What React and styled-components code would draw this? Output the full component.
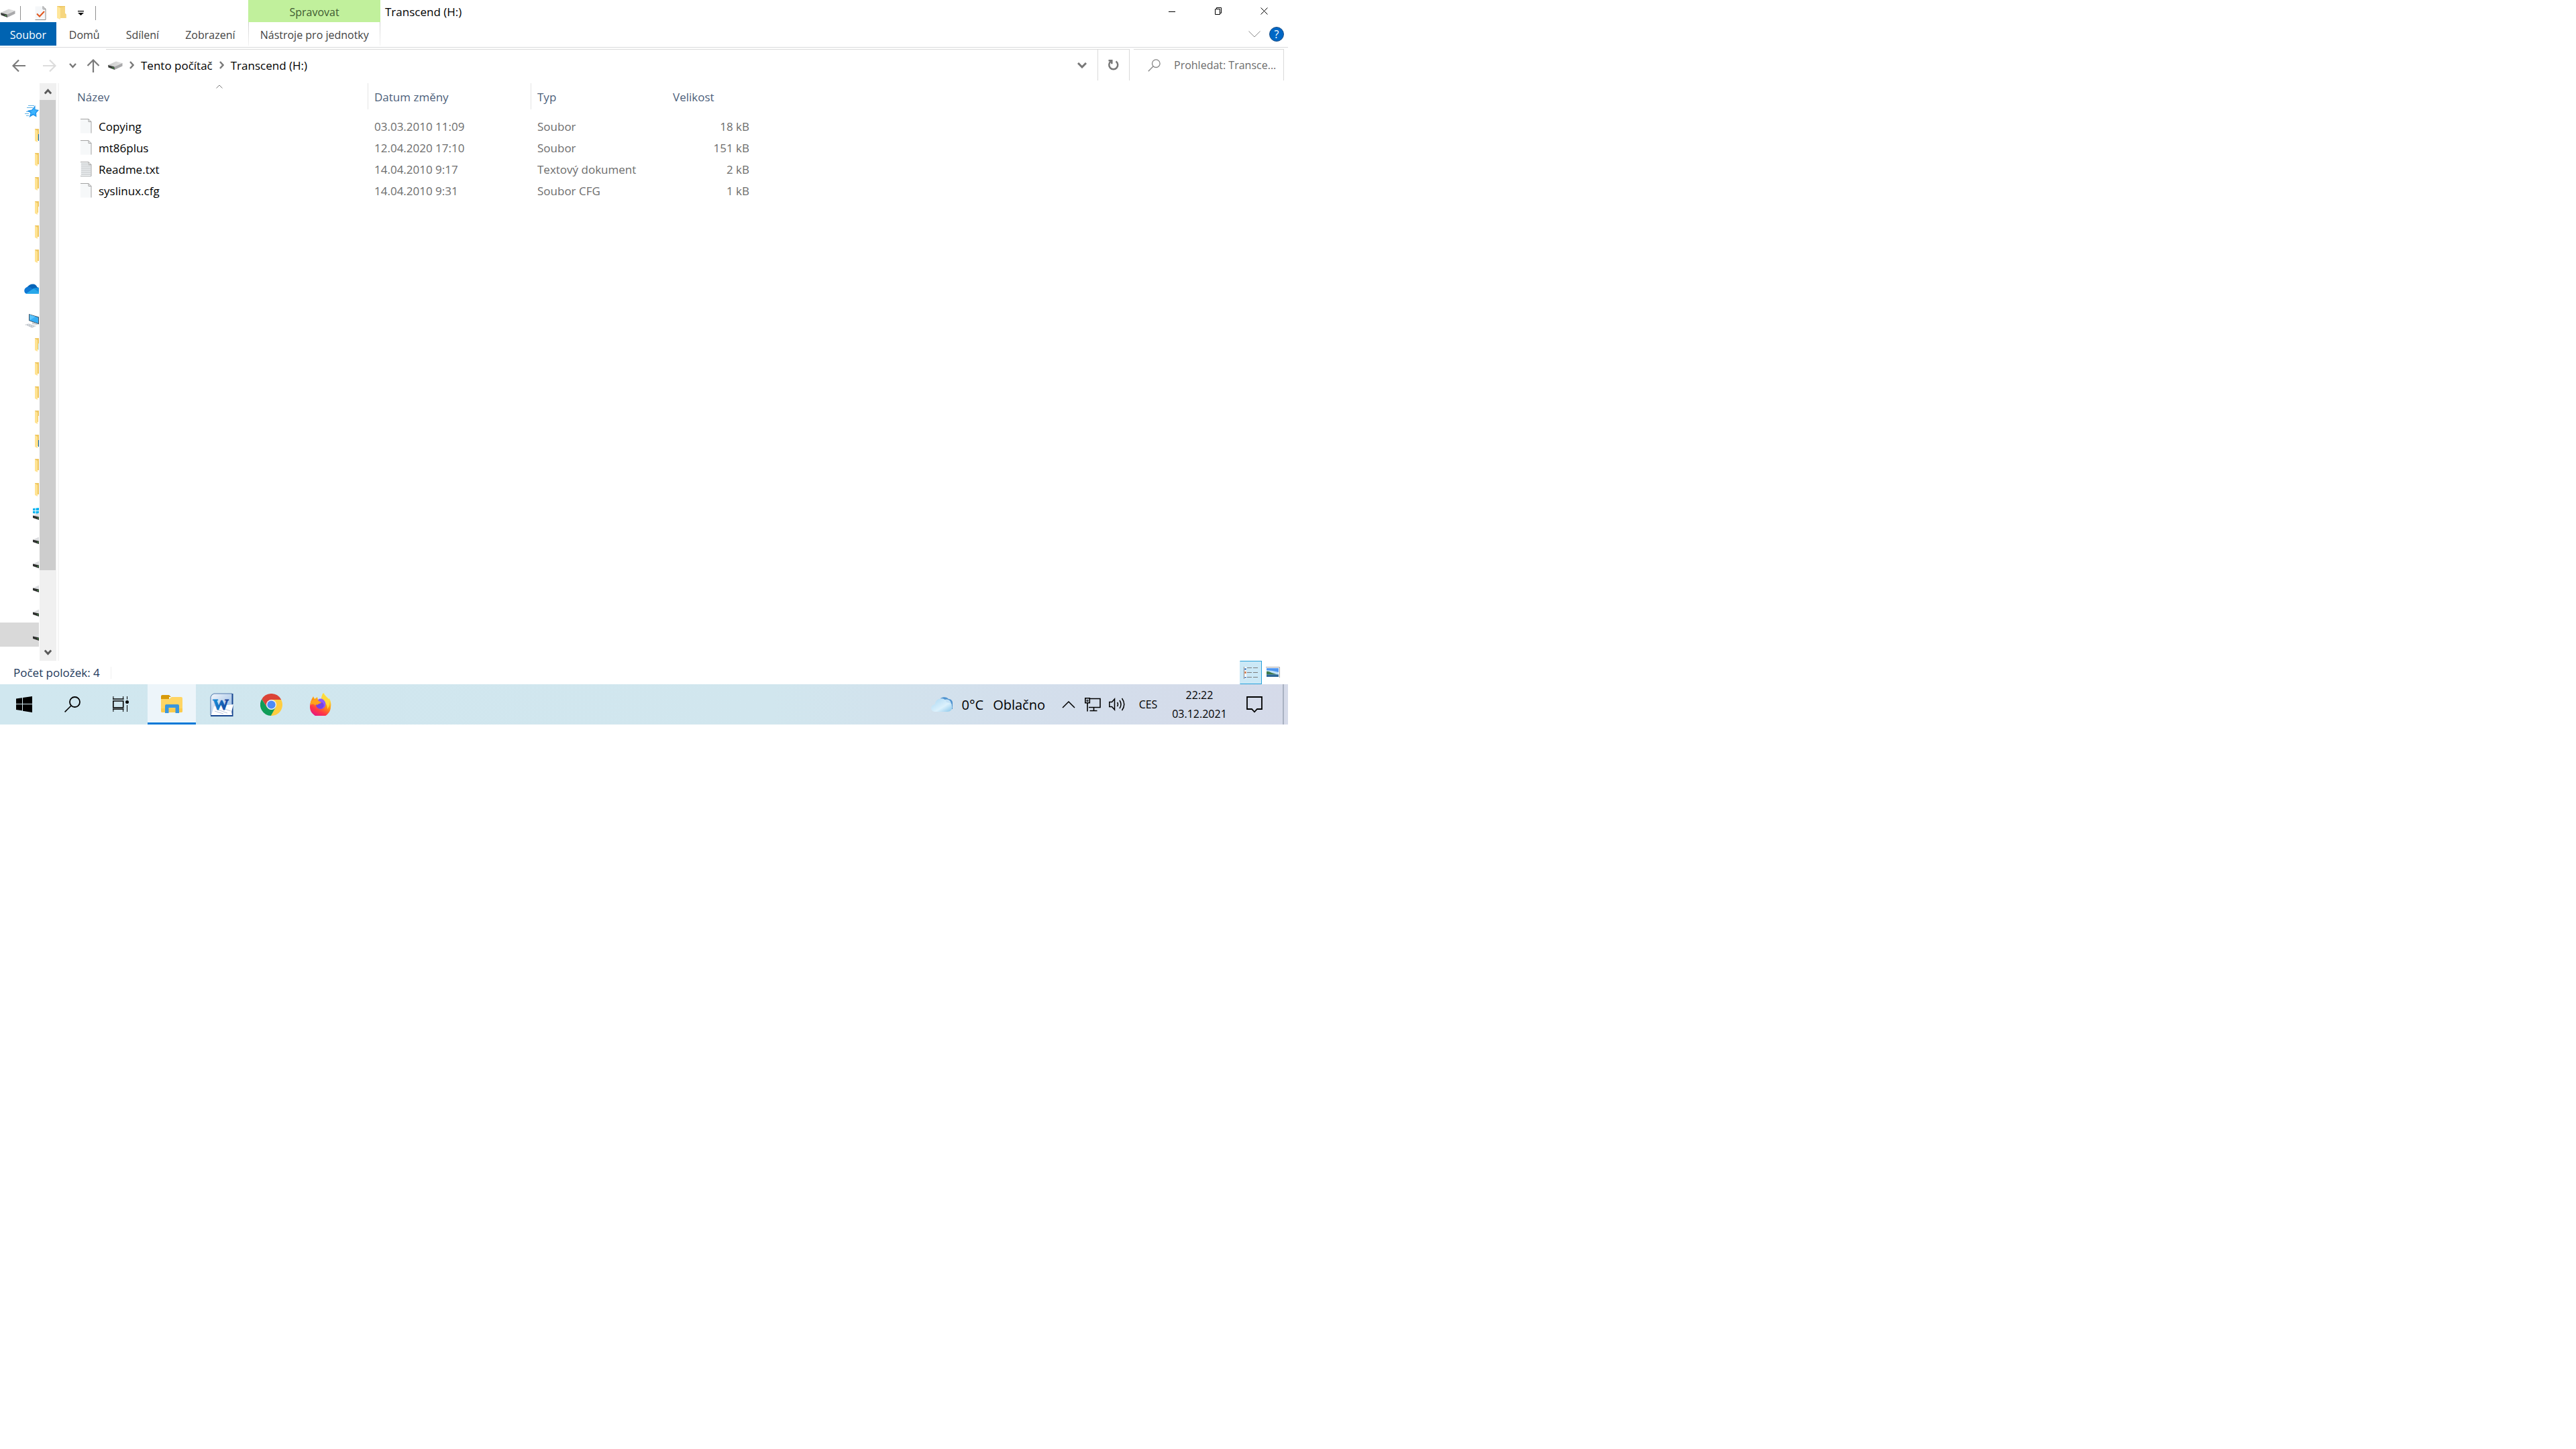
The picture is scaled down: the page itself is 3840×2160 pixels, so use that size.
import { useId } from 'react';
import styled, { createGlobalStyle } from 'styled-components';

const places = [
  { kind: 'star' },
  { kind: 'folder', badge: '#0067b8' },
  { kind: 'folder' },
  { kind: 'folder' },
  { kind: 'folder', badge: '#ffffff' },
  { kind: 'folder' },
  { kind: 'folder' },
  { kind: 'cloud', group: true },
  { kind: 'computer', group: true },
  { kind: 'folder', badge: '#c5ecf5' },
  { kind: 'folder' },
  { kind: 'folder' },
  { kind: 'folder', badge: '#ffffff' },
  { kind: 'folder', badge: '#0067b8' },
  { kind: 'folder' },
  { kind: 'folder' },
  { kind: 'disk', system: true },
  { kind: 'disk' },
  { kind: 'disk' },
  { kind: 'disk' },
  { kind: 'disk' },
  { kind: 'disk', selected: true },
];

const files = [
  { name: 'Copying', date: '03.03.2010 11:09', type: 'Soubor', size: '18 kB' },
  { name: 'mt86plus', date: '12.04.2020 17:10', type: 'Soubor', size: '151 kB' },
  { name: 'Readme.txt', date: '14.04.2010 9:17', type: 'Textový dokument', size: '2 kB', lined: true },
  { name: 'syslinux.cfg', date: '14.04.2010 9:31', type: 'Soubor CFG', size: '1 kB' },
];

const App = () => (
  <>
    <GlobalStyle />
    <Desktop>
      <Window>
        <TitleBar>
          <QuickAccess>
            <DriveIcon />
            <QuickDivider />
            <QuickButton $width={38} aria-label="Vlastnosti"><CheckedPageIcon /></QuickButton>
            <QuickButton $width={26} aria-label="Nová složka"><FolderIcon /></QuickButton>
            <QuickButton $width={30} aria-label="Přizpůsobit"><CustomizeIcon /></QuickButton>
            <QuickDivider />
          </QuickAccess>
          <ContextTitle>Spravovat</ContextTitle>
          <WindowTitle>Transcend (H:)</WindowTitle>
          <WindowButtons>
            <WindowButton aria-label="Minimalizovat">
              <svg width="10" height="10"><path d="M0 5.5h10" stroke="#000" /></svg>
            </WindowButton>
            <WindowButton aria-label="Obnovit">
              <svg width="10" height="11" fill="none" stroke="#000">
                <path d="M.5 2.5h7v8h-7zM2.5 2.5v-2h7v8h-2" />
              </svg>
            </WindowButton>
            <WindowButton aria-label="Zavřít">
              <svg width="11" height="11"><path d="M.5.5l10 10M10.500.5l-10 10" stroke="#000" /></svg>
            </WindowButton>
          </WindowButtons>
        </TitleBar>

        <Ribbon>
          <Tabs>
            <FileTab>Soubor</FileTab>
            <Tab>Domů</Tab>
            <Tab>Sdílení</Tab>
            <Tab>Zobrazení</Tab>
            <ContextTab>Nástroje pro jednotky</ContextTab>
          </Tabs>
          <RibbonTools>
            <PlainButton aria-label="Sbalit pás karet">
              <svg width="18" height="10" fill="none" stroke="#8a8a8a"><path d="M.5.5L9 9l8.500-8.500" /></svg>
            </PlainButton>
            <HelpButton>?</HelpButton>
          </RibbonTools>
        </Ribbon>

        <NavBar>
          <History>
            <PlainButton aria-label="Zpět"><ArrowIcon color="#7a7a7a" /></PlainButton>
            <PlainButton aria-label="Vpřed"><ArrowIcon color="#dcdcdc" turn={180} /></PlainButton>
            <PlainButton aria-label="Poslední umístění">
              <ChevronIcon width={11} height={8} color="#777" />
            </PlainButton>
            <PlainButton aria-label="Nahoru"><ArrowIcon color="#7a7a7a" turn={90} /></PlainButton>
          </History>
          <AddressBox>
            <Crumbs>
              <DriveIcon />
              <CrumbArrow />
              <Crumb href="#pc">Tento počítač</Crumb>
              <CrumbArrow />
              <Crumb href="#h">Transcend (H:)</Crumb>
            </Crumbs>
            <AddressButton aria-label="Předchozí umístění">
              <ChevronIcon width={14} height={9} color="#777" thick />
            </AddressButton>
            <RefreshButton aria-label="Aktualizovat">
              <svg width="18" height="18" fill="none" stroke="#777" strokeWidth="2.500">
                <path d="M12.500 3.500a6.500 6.500 0 1 1-7.500 0" />
                <path d="M1.500 2.200h4.800v5" />
              </svg>
            </RefreshButton>
          </AddressBox>
          <SearchBox>
            <svg width="19" height="19" fill="none" stroke="#858585" strokeWidth="1.300">
              <circle cx="12.300" cy="6.700" r="5.800" />
              <path d="M8.200 10.800L.8 18.200" />
            </svg>
            <SearchInput aria-label="Prohledat" placeholder="Prohledat: Transce..." />
          </SearchBox>
        </NavBar>

        <Content>
          <Sidebar>
            {places.map((place, i) => (
              <Place key={i} $group={place.group} $selected={place.selected}>
                <PlaceIcon {...place} />
              </Place>
            ))}
          </Sidebar>
          <ScrollTrack>
            <ScrollButton aria-label="Posunout nahoru"><ScrollArrow up /></ScrollButton>
            <ScrollThumb />
            <ScrollButton aria-label="Posunout dolů"><ScrollArrow /></ScrollButton>
          </ScrollTrack>
          <FileArea>
            <FileTable>
              <colgroup>
                <NameCol />
                <DateCol />
                <TypeCol />
                <SizeCol />
              </colgroup>
              <thead>
                <tr>
                  <HeadCell $divider>
                    Název
                    <SortMark width="10" height="6" fill="none" stroke="#7a7a7a">
                      <path d="M.5 5.500L5 1l4.500 4.500" />
                    </SortMark>
                  </HeadCell>
                  <HeadCell $divider>Datum změny</HeadCell>
                  <HeadCell>Typ</HeadCell>
                  <HeadCell>Velikost</HeadCell>
                </tr>
              </thead>
              <tbody>
                {files.map((file) => (
                  <tr key={file.name}>
                    <NameCell>
                      <FileName>
                        <PageIcon lined={file.lined} />
                        {file.name}
                      </FileName>
                    </NameCell>
                    <Cell>{file.date}</Cell>
                    <Cell>{file.type}</Cell>
                    <SizeCell>{file.size}</SizeCell>
                  </tr>
                ))}
              </tbody>
            </FileTable>
          </FileArea>
        </Content>

        <StatusBar>
          <ItemCount>Počet položek: 4</ItemCount>
          <ViewButtons>
            <ViewButton $active aria-label="Podrobnosti"><DetailsIcon /></ViewButton>
            <ViewButton aria-label="Velké ikony"><PictureIcon /></ViewButton>
          </ViewButtons>
        </StatusBar>
      </Window>

      <Taskbar>
        <Launchers>
          <TaskButton aria-label="Start">
            <svg width="24" height="24">
              <path d="M0 3.500l9-1.200V11H0zM10 2.100L24 0v11H10zM0 12h9v9.200l-9-1.200zM10 12h14v12l-14-2.300z" />
            </svg>
          </TaskButton>
          <TaskButton aria-label="Hledat">
            <svg width="24" height="24" fill="none" stroke="#000">
              <circle cx="15.500" cy="8.500" r="7.500" strokeWidth="1.800" />
              <path d="M10 14L.6 23.400" strokeWidth="1.500" />
            </svg>
          </TaskButton>
          <TaskButton aria-label="Zobrazení úkolů"><TaskViewIcon /></TaskButton>
        </Launchers>
        <TaskButton $active aria-label="Průzkumník souborů"><ExplorerIcon /></TaskButton>
        <TaskButton aria-label="Word"><WordIcon /></TaskButton>
        <TaskButton aria-label="Chrome"><ChromeIcon /></TaskButton>
        <TaskButton aria-label="Firefox"><FirefoxIcon /></TaskButton>
        <Tray>
          <Weather>
            <WeatherIcon />
            <span>0°C</span>
            <span>Oblačno</span>
          </Weather>
          <TrayButton $width={36} aria-label="Skryté ikony">
            <svg width="20" height="11" fill="none" stroke="#000" strokeWidth="1.500">
              <path d="M1 10l9-9 9 9" />
            </svg>
          </TrayButton>
          <TrayButton $width={36} aria-label="Síť"><NetworkIcon /></TrayButton>
          <TrayButton $width={36} aria-label="Hlasitost"><VolumeIcon /></TrayButton>
          <TrayButton $width={57}>CES</TrayButton>
          <Clock>
            <span>22:22</span>
            <span>03.12.2021</span>
          </Clock>
          <TrayButton $width={68} aria-label="Oznámení">
            <svg width="24" height="25" fill="none" stroke="#000" strokeWidth="1.800">
              <path d="M1 1h22v18h-7l-4 4.300L8 19H1z" />
            </svg>
          </TrayButton>
          <ShowDesktop aria-label="Zobrazit plochu" />
        </Tray>
      </Taskbar>
    </Desktop>
  </>
);

// Icons
const DriveIcon = () => {
  const id = useId();
  return (
    <svg width="22" height="13">
      <defs>
        <linearGradient id={id} x1="0" y1="0" x2="1" y2="0">
          <stop offset="0" stopColor="#c9c9c9" />
          <stop offset="1" stopColor="#e4e4e4" />
        </linearGradient>
      </defs>
      <path d="M0 6L12 .5 21.500 3 9.500 8.500z" fill={`url(#${id})`} />
      <path d="M9.500 8.500L21.500 3v4.500L10 13z" fill="#a9a9ab" />
      <path d="M0 6l9.500 2.500L10 13 .5 9.500z" fill="#3c3f3c" />
      <path d="M6.800 9.500l1.600.5v1.300l-1.600-.5z" fill="#4fdc4f" />
    </svg>
  );
};

const CheckedPageIcon = () => (
  <svg width="17" height="21" fill="none">
    <path d="M.5.5h11.500l4 4v16H.5z" fill="#f5f7f9" />
    <path d="M12 .5v4h4v16H.5" stroke="#8c8c8c" />
    <path d="M12 .5l4 4" stroke="#8c8c8c" />
    <path d="M3 11.500l4 4L14 8" stroke="#e2571e" strokeWidth="2" />
  </svg>
);

const FolderIcon = () => (
  <svg width="14" height="20">
    <path d="M0 0h12v11l1.500 1v6H4z" fill="#eec662" />
    <path d="M5 2l7-1v11l1.500 1v5H5z" fill="#f6d67f" />
    <path d="M0 .5l5 2V20l-5-2z" fill="#ffe69a" />
  </svg>
);

const CustomizeIcon = () => (
  <svg width="9" height="7"><path d="M0 0h9v1.300H0zM0 3h9L4.500 7z" /></svg>
);

const ArrowIcon = ({ color, turn = 0 }) => (
  <svg width="20" height="20" fill="none" stroke={color} strokeWidth="2.200">
    <path d="M1.500 10H20M10 1.500L1.500 10l8.500 8.500" transform={`rotate(${turn} 10 10)`} />
  </svg>
);

const ChevronIcon = ({ width, height, color, thick }) => (
  <svg width={width} height={height} fill="none" stroke={color} strokeWidth={thick ? 3 : 2.4}>
    <path d={`M1 1L${width / 2} ${height - 2}L${width - 1} 1`} />
  </svg>
);

const CrumbArrow = () => (
  <svg width="7" height="12" fill="none" stroke="#7a7a7a" strokeWidth="2.500">
    <path d="M1 1l4.500 5L1 11" />
  </svg>
);

const ScrollArrow = ({ up }) => (
  <svg width="11" height="9" fill="none" stroke="#5a5a5a" strokeWidth="3">
    <path d={up ? 'M.8 7.500l4.700-5 4.700 5' : 'M.8 1.500l4.700 5 4.700-5'} />
  </svg>
);

const PageIcon = ({ lined }) => (
  <svg width="17" height="22" fill="none">
    <path d="M0 .5h12l4 4v17H0z" fill="#f6f8f9" />
    <path d="M0 .5h12l4 4v17" stroke="#a3a3a3" />
    <path d="M12 .5v4h4" stroke="#a3a3a3" />
    {lined && <path d="M1 3.500h10M1 6.500h14M1 9.500h14M1 12.500h14M1 15.500h14M1 18.500h14M0 21.500h16" stroke="#a8adb0" />}
  </svg>
);

// The navigation pane is narrower than its icons, so each one shows only its left part
const PlaceIcon = ({ kind, badge, system }) => {
  switch (kind) {
    case 'star':
      return (
        <svg width="21" height="18">
          <path d="M5 .5h9M3 3.500h9M2 9.500h4M0 12.500h6M2 15.500h4" stroke="#5fb2e6" />
          <path d="M15.500 0v6l5.500 1-4 4.500.5 6-5-3-6 3.500 2-6.500L3.500 8l7-1.500z" fill="#1f94ea" />
          <path d="M14.500 3v4l4 .8-3 3.200.5 4-3.500-2.500-4 2 1.500-4.500-3-1.800 4.500-.7z" fill="#3db4ff" />
        </svg>
      );
    case 'folder':
      return (
        <svg width="6" height="20">
          <path d="M0 0h6v17H0z" fill="#eec662" />
          <path d="M0 .5l4 2.500v17l-4-2z" fill="#ffe392" />
          {badge && <path d="M5 8h1v10H5z" fill={badge} />}
        </svg>
      );
    case 'cloud':
      return (
        <svg width="22" height="15">
          <path d="M4 6c2-4 6-6 10-5.500 3 .2 4 2 5.500 4.500L22 6v5L9 10z" fill="#0664b8" />
          <path d="M4 5c3-1 5 0 8 2l6 4-8 4H4c-5-1-5-8 0-10z" fill="#0f78d4" />
          <path d="M3 14.500L14 7l8-1v9H4z" fill="#28a8ea" />
          <path d="M14 7l3-1 5 .5v6z" fill="#1490df" />
        </svg>
      );
    case 'computer':
      return (
        <svg width="21" height="21">
          <path d="M6 0l15 4.500v11L6 10z" fill="#3a4f60" />
          <path d="M7 1l13 4.200v8.800L7 9.500z" fill="#35aef5" />
          <path d="M7 1l9 3-9 5.500z" fill="#5cc3fb" />
          <path d="M11 12l8 2.500v2l-8-1.500z" fill="#c8ccd0" />
          <path d="M0 16l6-1.500 11 3.500-6 2.500z" fill="#b7bcc3" />
          <path d="M2 16l12 3.500M5 15l11 3.500" stroke="#f4f5f6" strokeDasharray="2 1" />
        </svg>
      );
    default:
      return (
        <svg width="9" height="18">
          {system && <path d="M0 1l3.500-.5V4H0zM4.500.4L9 0v4H4.500zM0 5h3.500v3.500L0 8zM4.500 5H9v4l-4.500-.5z" fill="#00b3f0" />}
          <path d="M0 11.500l9-4V13z" fill="#dcdde0" />
          <path d="M0 11.500l9 2V18l-9-3z" fill="#2f302f" />
          <path d="M7 14.500h1v1.500H7z" fill="#46d84c" />
        </svg>
      );
  }
};

const DetailsIcon = () => (
  <svg width="21" height="20" fill="none">
    <path d="M.5 1v18" stroke="#8a8a8a" />
    <path d="M1 1h3v18H1z" fill="#fff" />
    <path d="M2.500 3v3M2.500 16v2" stroke="#3b78c4" strokeWidth="2" />
    <path d="M2.500 8v3" stroke="#c9622f" strokeWidth="2" />
    <path d="M5 2.500h7M14 2.500h7M5 9.500h7M14 9.500h7M5 16.500h7M14 16.500h7" stroke="#7c7c7c" />
  </svg>
);

const PictureIcon = () => (
  <svg width="22" height="18">
    <path d="M0 .5h20.500V16" fill="none" stroke="#a5a5a5" />
    <path d="M1 2h18v13H1z" fill="#4f96f0" />
    <path d="M1 5l9 1 9 2v5H1z" fill="#bfe0f7" />
    <path d="M1 7c3-1 5 1 8 2l8 2.500H1z" fill="#3f7a4c" />
    <path d="M1 11.500h18V15H1z" fill="#2d6798" />
  </svg>
);

const TaskViewIcon = () => (
  <svg width="25" height="24" fill="none" stroke="#000">
    <path d="M.9 0v4.500M15.600 0v4.500M.9 18.500V23M15.600 18.500V23M21.500 0v4.500M21.500 13v10" />
    <path d="M0 4h16.500M0 19h16.500" strokeWidth="1.600" />
    <path d="M.8 7h14.900v9.800H.8z" strokeWidth="1.600" />
    <circle cx="21.500" cy="8.500" r="2.500" fill="#000" stroke="none" />
  </svg>
);

const ExplorerIcon = () => (
  <svg width="32" height="27">
    <path d="M0 2q0-2 2-2h10l3 3h-3v4H0z" fill="#d79a0a" />
    <path d="M0 6h12l4-3h14q2 0 2 2v19q0 2-2 2H2q-2 0-2-2z" fill="#ffd563" />
    <path d="M0 20h32v4q0 2-2 2H2q-2 0-2-2z" fill="#fbcb4c" />
    <path d="M6 27V16q0-2 2-2h17q2 0 2 2v11h-5.500v-8h-10v8z" fill="#3a96dd" />
  </svg>
);

const WordIcon = () => (
  <svg width="35" height="35">
    <defs>
      <linearGradient id="wordBack" x1="0" y1="0" x2="1" y2="1">
        <stop offset="0" stopColor="#f2f7fd" />
        <stop offset="1" stopColor="#8fb4de" />
      </linearGradient>
      <linearGradient id="wordMark" x1="0" y1="0" x2="1" y2="0">
        <stop offset="0" stopColor="#1593dc" />
        <stop offset="1" stopColor="#173c98" />
      </linearGradient>
    </defs>
    <path d="M6 1h27v32H1V6z" fill="url(#wordBack)" />
    <path d="M1 33V6q1-4 5-5h27" fill="none" stroke="#5279ad" />
    <path d="M33.500 1v33H1" fill="none" stroke="#17458f" strokeWidth="2" />
    <path d="M6 20l29-3-3 11 1 5H2z" fill="#fff" />
    <path d="M7 27l13 4M12 25l14 5M22 24l9 3" stroke="#b9c6dd" />
    <WordLetter x="16" y="25" textAnchor="middle" fill="url(#wordMark)" stroke="url(#wordMark)">W</WordLetter>
  </svg>
);

const ChromeIcon = () => (
  <svg width="33" height="33" viewBox="0 0 48 48">
    <path d="M24 13h21.300l-.5-1A24 24 0 0 0 3.200 12l11.300 17z" fill="#db4437" />
    <path d="M33.500 29.500L24 48A24 24 0 0 1 3.200 12l11.300 17.500z" fill="#0f9d58" />
    <path d="M33.500 29.500L23 48A24 24 0 0 0 45.300 13H24z" fill="#ffcd40" />
    <circle cx="24" cy="24" r="11" fill="#f1f1f1" />
    <circle cx="24" cy="24" r="8.900" fill="#4c8bf5" />
  </svg>
);

const FirefoxIcon = () => (
  <svg width="32" height="34">
    <defs>
      <linearGradient id="foxFire" x1="0.8" y1="0" x2="0.3" y2="1">
        <stop offset="0.1" stopColor="#fff44f" />
        <stop offset="0.45" stopColor="#ff980e" />
        <stop offset="0.75" stopColor="#ff3647" />
        <stop offset="1" stopColor="#e31587" />
      </linearGradient>
    </defs>
    <path d="M5 5l2 4 4-3 1 4h5c0-4 2-8 4-10 1 4 5 6 7 9l1-1c2 4 3 8 2 13a15.500 15.500 0 0 1-31-1c0-5 2-10 5-15z" fill="url(#foxFire)" />
    <path d="M20 0c2 5 6 6 8 11 2 4 1 9-2 13 1-8-6-11-9-14 0-4 1-8 3-10z" fill="#ffd83c" />
    <circle cx="16" cy="17" r="7" fill="#7542e5" />
    <path d="M12 10c4-3 9-1 11 4 2 7-4 11-9 9 6 1 8-4 6-7-1-3-4-3-7-2z" fill="#9059ff" />
    <path d="M1 13c2-3 6-4 11-2l3 2 2 1c-1 2-5 2-6 4-1-1-3-1-3 1-2-3-4-3-7-1z" fill="#ffa21c" />
  </svg>
);

const WeatherIcon = () => (
  <svg width="32" height="23">
    <defs>
      <linearGradient id="cloudFront" x1="0" y1="0" x2="1" y2="1">
        <stop offset="0" stopColor="#a9d6f3" />
        <stop offset="0.6" stopColor="#dcf1fc" />
        <stop offset="1" stopColor="#86c5ea" />
      </linearGradient>
    </defs>
    <path d="M14 2c4-3 10-2 12 1 4 0 6 3 6 6v9H18z" fill="#4f93cf" />
    <path d="M17 6c4-4 10-3 12 1l2 5-12 4z" fill="#c3e1f6" />
    <path d="M7 22c-9 0-9-10-1-11 0-10 15-12 17-3 11 0 11 14 1 14z" fill="url(#cloudFront)" />
  </svg>
);

const NetworkIcon = () => (
  <svg width="24" height="21" fill="none" stroke="#000" strokeWidth="1.600">
    <path d="M8 1.500h15v13H6" />
    <path d="M.8.800h6.500v7H.8zM4 8v12.500M13.500 14.500v5M7.500 19.500h11" />
    <path d="M3 3.500h2v2H3z" strokeWidth="1" />
  </svg>
);

const VolumeIcon = () => (
  <svg width="25" height="22" fill="none" stroke="#000" strokeWidth="1.500">
    <path d="M.8 7.500h3.700l4-4.500v16l-4-4.500H.8z" />
    <path d="M12.500 8q2 3 0 6M16 5q4 6 0 12M19.500 2q6.500 9 0 18" />
  </svg>
);

// Styled components
const GlobalStyle = createGlobalStyle`
  * {
    box-sizing: border-box;
  }

  body {
    margin: 0;
    background: #fff;
    font-family: 'Open Sans', 'Noto Sans', sans-serif;
    font-size: 17px;
    color: #000;
  }

  button,
  input {
    font: inherit;
    color: inherit;
    background: none;
    border: none;
    padding: 0;
  }

  svg {
    display: block;
    flex: none;
  }
`;

const Desktop = styled.div`
  display: flex;
  flex-direction: column;
  width: 50vw;
  min-height: 50vh;
`;

const Window = styled.main`
  display: flex;
  flex: 1;
  flex-direction: column;
`;

const PlainButton = styled.button`
  display: flex;
  align-items: center;
  justify-content: center;
`;

const TitleBar = styled.header`
  display: flex;
  height: 33px;
`;

const QuickAccess = styled.div`
  display: flex;
  align-items: center;
  width: 370px;
  padding-left: 1px;
  padding-top: 5px;
`;

const QuickDivider = styled.span`
  width: 1px;
  height: 21px;
  margin: 0 10px 0 7px;
  background: #8f8f8f;
`;

const QuickButton = styled(PlainButton)`
  width: ${({ $width }) => $width}px;
`;

const ContextTitle = styled.div`
  display: flex;
  align-items: center;
  justify-content: center;
  width: 197px;
  padding-top: 3px;
  background: #c1f09c;
  color: #3f5a33;
  font-size: 16px;
`;

const WindowTitle = styled.h1`
  flex: 1;
  margin: 0;
  padding-left: 7px;
  font-size: 17px;
  font-weight: 400;
  line-height: 35px;
`;

const WindowButtons = styled.div`
  display: flex;
  padding-right: 1px;
`;

const WindowButton = styled(PlainButton)`
  width: 69px;
`;

const Ribbon = styled.nav`
  display: flex;
  justify-content: space-between;
  height: 38px;
  padding-bottom: 2px;
  border-bottom: 1px solid #d9dadc;
  font-size: 16px;
  color: #444;
`;

const Tabs = styled.div`
  display: flex;
  width: 567px;
`;

const Tab = styled.button`
  padding: 2px 20px 0 19px;
`;

const FileTab = styled(Tab)`
  width: 84px;
  padding: 2px 0 0;
  background: #0063b1;
  color: #fff;
`;

const ContextTab = styled(Tab)`
  width: 197px;
  padding: 2px 0 0;
  margin-left: auto;
  border: 1px solid;
  border-width: 0 1px;
  border-image: linear-gradient(#d0d0d0, #f4f4f4) 1;
`;

const RibbonTools = styled.div`
  display: flex;
  align-items: center;
  gap: 13px;
  padding-right: 6px;
`;

const HelpButton = styled.button`
  width: 22px;
  height: 22px;
  border: 1px solid #1c4f86;
  border-radius: 50%;
  background: #0067c5;
  color: #fff;
  font-size: 16px;
  line-height: 20px;
`;

const NavBar = styled.div`
  display: flex;
  height: 47px;
  margin: 2px 6px 4px 0;
`;

const History = styled.div`
  display: grid;
  grid-template-columns: 48px 44px 24px 38px;
  padding: 2px 0 0 4px;
`;

const AddressBox = styled.div`
  display: flex;
  flex: 1;
  margin-right: 6px;
  border: 1px solid #d9d9d9;
  border-width: 1px 1px 0 0;
`;

const Crumbs = styled.div`
  display: flex;
  flex: 1;
  align-items: center;
  gap: 10px;
  padding-left: 3px;
`;

const Crumb = styled.a`
  color: #000;
  text-decoration: none;
`;

const AddressButton = styled(PlainButton)`
  width: 47px;
`;

const RefreshButton = styled(PlainButton)`
  width: 47px;
  border-left: 1px solid #d9d9d9;
`;

const SearchBox = styled.label`
  display: flex;
  align-items: center;
  gap: 20px;
  width: 224px;
  padding-left: 21px;
  border: 1px solid #d9d9d9;
  border-width: 1px 1px 0 0;
`;

const SearchInput = styled.input`
  flex: 1;
  min-width: 0;
  font-size: 16px;

  &::placeholder {
    color: #6d6d6d;
    opacity: 1;
  }
`;

const Content = styled.div`
  display: flex;
  flex: 1;
`;

const Sidebar = styled.nav`
  width: 58px;
  padding: 24px 0 21px;
`;

const Place = styled.div`
  display: flex;
  align-items: center;
  justify-content: flex-end;
  height: 36px;
  margin-top: ${({ $group }) => ($group ? 12 : 0)}px;
  background: ${({ $selected }) => ($selected ? '#d9d9d9' : 'transparent')};
`;

const ScrollTrack = styled.div`
  display: flex;
  flex-direction: column;
  width: 25px;
  margin: 0 2px 0 1px;
  background: #f0f0f0;
`;

const ScrollThumb = styled.div`
  flex: 1;
  margin: 0 1px 110px 0;
  background: #cdcdcd;
`;

const ScrollButton = styled(PlainButton)`
  height: 25px;
`;

const FileArea = styled.section`
  flex: 1;
  padding-left: 18px;
  border-left: 2px solid #f5f5f5;
`;

const FileTable = styled.table`
  width: 1024px;
  table-layout: fixed;
  border-spacing: 0;

  thead::after {
    content: '';
    display: table-row;
    height: 9px;
  }
`;

const NameCol = styled.col`
  width: 443px;
`;

const DateCol = styled.col`
  width: 243px;
`;

const TypeCol = styled.col`
  width: 202px;
`;

const SizeCol = styled.col`
  width: 136px;
`;

const HeadCell = styled.th`
  position: relative;
  height: 39px;
  padding: 1px 9px 0;
  border-right: 1px solid ${({ $divider }) => ($divider ? '#e5e5e5' : 'transparent')};
  color: #4c607a;
  font-weight: 400;
  text-align: left;
`;

const SortMark = styled.svg`
  position: absolute;
  top: 2px;
  left: calc(50% - 5px);
`;

const Cell = styled.td`
  height: 32px;
  padding: 0 9px;
  color: #6d6d6d;
`;

const NameCell = styled(Cell)`
  padding-left: 14px;
  color: #000;
`;

const SizeCell = styled(Cell)`
  padding-right: 13px;
  text-align: right;
`;

const FileName = styled.div`
  display: flex;
  align-items: center;
  gap: 10px;
`;

const StatusBar = styled.footer`
  display: flex;
  align-items: center;
  justify-content: space-between;
  height: 35px;
  padding: 0 6px 0 20px;
  color: #1e395b;
`;

const ItemCount = styled.span`
  padding-right: 16px;
  border-right: 1px solid #f0f0f0;
  line-height: 18px;
`;

const ViewButtons = styled.div`
  display: flex;
  height: 100%;
`;

const ViewButton = styled(PlainButton)`
  width: 33px;
  border: 1px solid ${({ $active }) => ($active ? '#26a0da' : 'transparent')};
  border-left-color: transparent;
  background: ${({ $active }) => ($active ? '#cbe8f6' : 'transparent')};
`;

const Taskbar = styled.footer`
  display: flex;
  gap: 2px;
  height: 60px;
  background: linear-gradient(90deg, #d0e7ef 0%, #d1e6ee 60%, #d3dfec 78%, #d5dae9 100%);
`;

const Launchers = styled.div`
  display: flex;
  margin-right: 2px;
`;

const TaskButton = styled(PlainButton)`
  width: 72px;
  padding-top: ${({ $active }) => ($active ? 1 : 0)}px;
  border-bottom: ${({ $active }) => ($active ? '3px solid #0078d7' : 'none')};
  background: ${({ $active }) => ($active ? '#edf5fa' : 'transparent')};
`;

const WordLetter = styled.text`
  font-family: 'Liberation Serif', serif;
  font-size: 24px;
  font-weight: 700;
`;

const Tray = styled.div`
  display: flex;
  margin-left: auto;
`;

const Weather = styled.button`
  display: flex;
  align-items: center;
  gap: 14px;
  padding-right: 17px;
  font-size: 20px;
`;

const TrayButton = styled(PlainButton)`
  width: ${({ $width }) => $width}px;
  font-size: 16px;
`;

const Clock = styled.button`
  display: flex;
  flex-direction: column;
  align-items: center;
  justify-content: center;
  width: 96px;
  font-size: 16px;
  line-height: 28px;
`;

const ShowDesktop = styled.button`
  width: 8px;
  margin-left: 8px;
  border-left: 2px solid #a9b1c1;
`;

export default App;
